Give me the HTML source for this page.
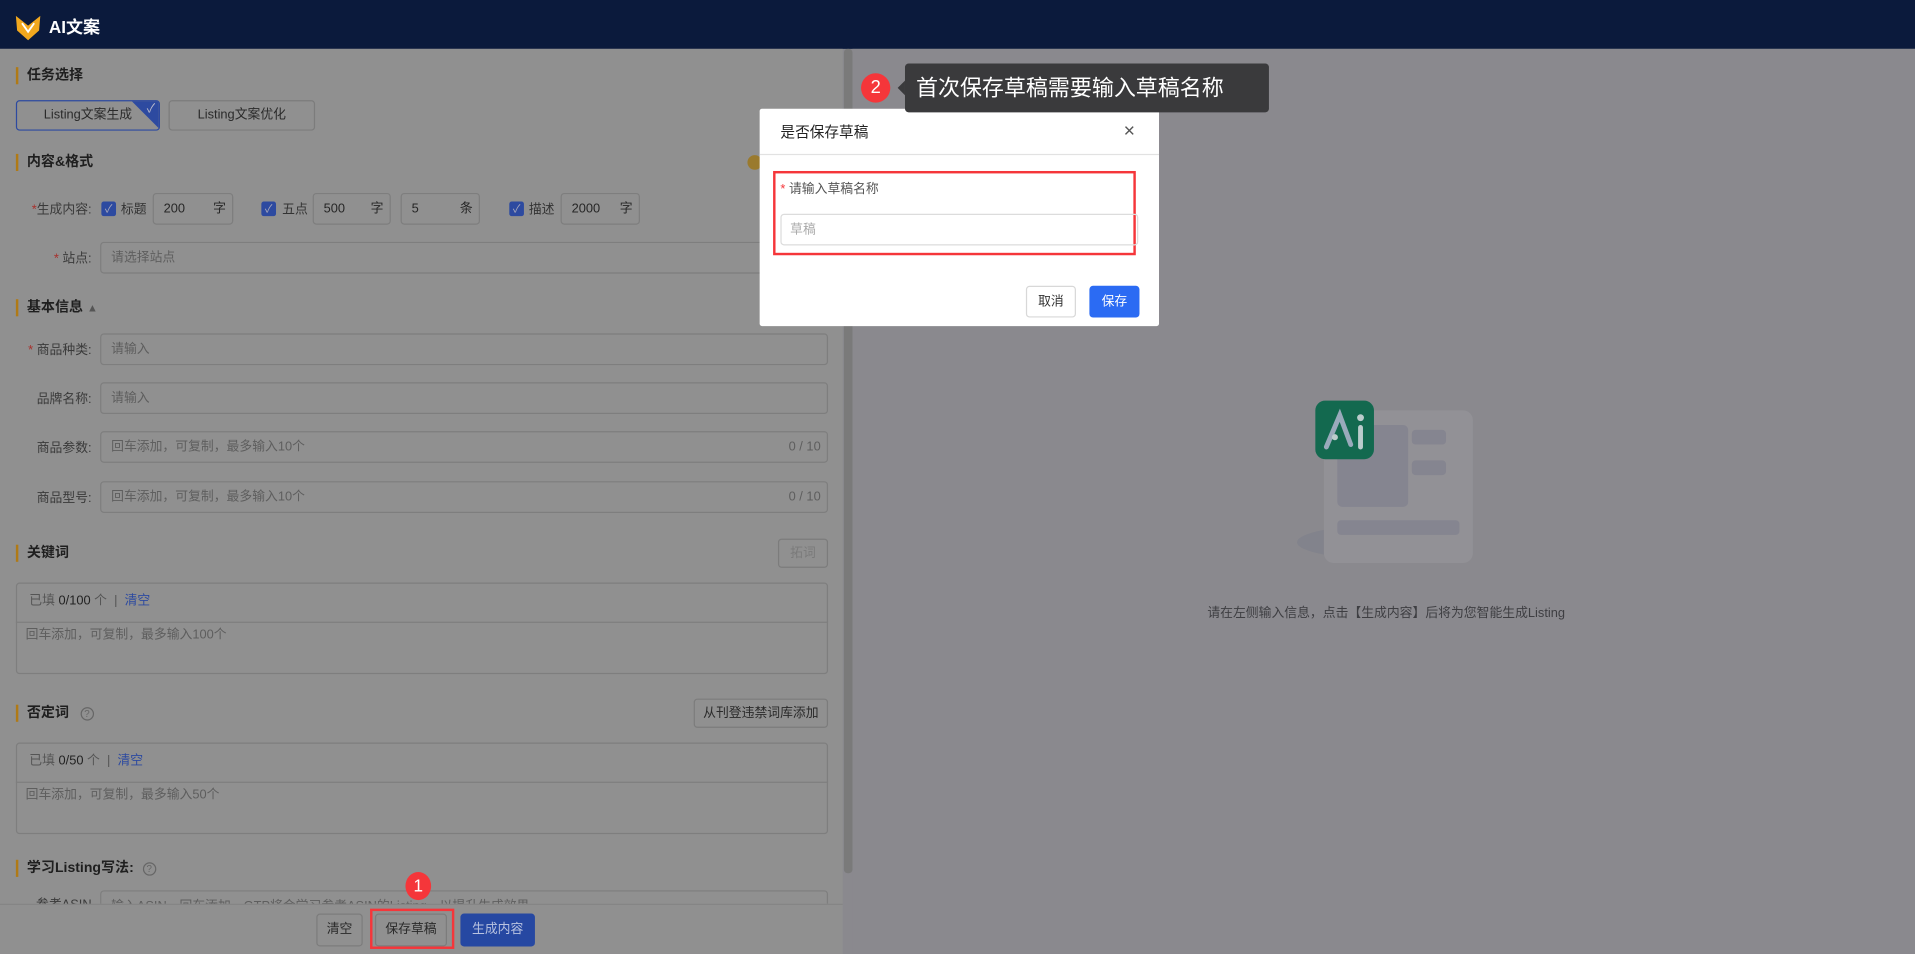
<!DOCTYPE html>
<html><head><meta charset="utf-8">
<style>
*{box-sizing:border-box;margin:0;padding:0}
html,body{width:1915px;height:954px;overflow:hidden;background:#8a898e}
#s{position:absolute;left:0;top:0;width:1568px;height:781px;transform:scale(1.22130);transform-origin:0 0;font-family:"Liberation Sans","Noto Sans CJK SC",sans-serif;font-size:11px;color:#333}
.a{position:absolute}
.hd{left:0;top:0;width:1568px;height:40px;background:#0b1a3c}
.left{left:0;top:40px;width:690px;height:741px;background:#909090}
.right{left:698px;top:40px;width:870px;height:741px;background:#8a898e}
.sb{left:691px;top:40px;width:7px;height:675px;background:#7a7a7a;border-radius:3px}
.sec{font-size:11.5px;font-weight:bold;color:#1f1f1f;padding-left:7px;border-left:2px solid #b07a16;line-height:14px}
.inp{border:1px solid #7e7e7e;border-radius:3px;background:#909090;height:26px;line-height:24px;padding-left:8px;color:#5e5e5e;font-size:10.5px}
.v{color:#262626}
.lab{font-size:10.5px;color:#3a3a3a;text-align:right;width:70px}
.st{color:#a8302c}
.cb{width:12px;height:12px;background:#2d4aa0;border-radius:2px;color:#aab;font-size:9px;line-height:12px;text-align:center}
.btn{border:1px solid #7c7c7c;border-radius:3px;text-align:center;font-size:10.5px;color:#2a2a2a;background:#909090}
</style></head><body><div id="s">
<div class="a hd"></div>
<svg class="a" style="left:12px;top:12px" width="22" height="22" viewBox="0 0 22 22"><path d="M1 1 L11 9 L21 1 L20 13 L11 21 L2 13Z" fill="#f2a81e"/><path d="M6 7 L11 14 L16 7" stroke="#fff" stroke-width="1.5" fill="none"/></svg>
<div class="a" style="left:40px;top:12px;color:#fff;font-weight:bold;font-size:14px">AI文案</div>
<div class="a left"></div><div class="a right"></div><div class="a sb"></div>

<div class="a sec" style="left:13px;top:55px">任务选择</div>
<div class="a btn" style="left:13px;top:82px;width:118px;height:25px;line-height:23px;border-color:#2d4aa0;overflow:hidden">Listing文案生成<div class="a" style="right:-1px;top:-1px;width:0;height:0;border-top:24px solid #2d4aa0;border-left:24px solid transparent"></div><span class="a" style="right:3px;top:-5px;color:#bbc;font-size:10px">✓</span></div>
<div class="a btn" style="left:138px;top:82px;width:120px;height:25px;line-height:23px">Listing文案优化</div>

<div class="a sec" style="left:13px;top:126px">内容&amp;格式</div>
<div class="a" style="left:612px;top:127px;width:12px;height:12px;border-radius:50%;background:#9a7a2e"></div>
<div class="a lab" style="left:5px;top:164px"><span class="st">*</span>生成内容:</div>
<div class="a cb" style="left:83px;top:165px">✓</div><div class="a" style="left:99px;top:164px;font-size:10.5px">标题</div>
<div class="a inp v" style="left:125px;top:158px;width:66px">200<span style="position:absolute;right:5px">字</span></div>
<div class="a cb" style="left:214px;top:165px">✓</div><div class="a" style="left:231px;top:164px;font-size:10.5px">五点</div>
<div class="a inp v" style="left:256px;top:158px;width:64px">500<span style="position:absolute;right:5px">字</span></div>
<div class="a inp v" style="left:328px;top:158px;width:65px">5<span style="position:absolute;right:5px">条</span></div>
<div class="a cb" style="left:417px;top:165px">✓</div><div class="a" style="left:433px;top:164px;font-size:10.5px">描述</div>
<div class="a inp v" style="left:459px;top:158px;width:65px">2000<span style="position:absolute;right:5px">字</span></div>
<div class="a lab" style="left:5px;top:204px"><span class="st">*</span> 站点:</div>
<div class="a inp" style="left:82px;top:198px;width:610px">请选择站点</div>

<div class="a sec" style="left:13px;top:245px">基本信息 <span style="color:#555;font-size:9px">▲</span></div>
<div class="a lab" style="left:5px;top:279px"><span class="st">*</span> 商品种类:</div>
<div class="a inp" style="left:82px;top:273px;width:596px">请输入</div>
<div class="a lab" style="left:5px;top:319px">品牌名称:</div>
<div class="a inp" style="left:82px;top:313px;width:596px">请输入</div>
<div class="a lab" style="left:5px;top:359px">商品参数:</div>
<div class="a inp" style="left:82px;top:353px;width:596px">回车添加，可复制，最多输入10个<span style="position:absolute;right:5px">0 / 10</span></div>
<div class="a lab" style="left:5px;top:400px">商品型号:</div>
<div class="a inp" style="left:82px;top:394px;width:596px">回车添加，可复制，最多输入10个<span style="position:absolute;right:5px">0 / 10</span></div>

<div class="a sec" style="left:13px;top:446px">关键词</div>
<div class="a btn" style="left:637px;top:441px;width:41px;height:24px;line-height:22px;color:#7a7a7a">拓词</div>
<div class="a" style="left:13px;top:477px;width:665px;height:75px;border:1px solid #7e7e7e;border-radius:3px"></div>
<div class="a" style="left:13px;top:509px;width:665px;height:1px;background:#7e7e7e"></div>
<div class="a" style="left:24px;top:484px;font-size:10.5px;color:#555">已填 <span style="color:#222">0/100</span> 个 &nbsp;| &nbsp;<span style="color:#2d4aa0">清空</span></div>
<div class="a" style="left:21px;top:512px;font-size:10.5px;color:#5e5e5e">回车添加，可复制，最多输入100个</div>

<div class="a sec" style="left:13px;top:577px">否定词 <span style="display:inline-block;width:11px;height:11px;border:1px solid #666;border-radius:50%;font-size:8px;line-height:9px;text-align:center;color:#666;margin-left:6px;font-weight:normal">?</span></div>
<div class="a btn" style="left:568px;top:572px;width:110px;height:24px;line-height:22px">从刊登违禁词库添加</div>
<div class="a" style="left:13px;top:608px;width:665px;height:75px;border:1px solid #7e7e7e;border-radius:3px"></div>
<div class="a" style="left:13px;top:640px;width:665px;height:1px;background:#7e7e7e"></div>
<div class="a" style="left:24px;top:615px;font-size:10.5px;color:#555">已填 <span style="color:#222">0/50</span> 个 &nbsp;| &nbsp;<span style="color:#2d4aa0">清空</span></div>
<div class="a" style="left:21px;top:643px;font-size:10.5px;color:#5e5e5e">回车添加，可复制，最多输入50个</div>

<div class="a sec" style="left:13px;top:704px">学习Listing写法: <span style="display:inline-block;width:11px;height:11px;border:1px solid #666;border-radius:50%;font-size:8px;line-height:9px;text-align:center;color:#666;margin-left:4px;font-weight:normal">?</span></div>
<div class="a inp" style="left:82px;top:729px;width:596px;height:20px">输入ASIN，回车添加，GTP将会学习参考ASIN的Listing，以提升生成效果</div>
<div class="a lab" style="left:5px;top:733px">参考ASIN</div>
<div class="a" style="left:0;top:740px;width:690px;height:41px;background:#909090;border-top:1px solid #858585"></div>
<div class="a btn" style="left:259px;top:748px;width:38px;height:27px;line-height:25px">清空</div>
<div class="a btn" style="left:307px;top:748px;width:59px;height:27px;line-height:25px">保存草稿</div>
<div class="a btn" style="left:377px;top:748px;width:61px;height:27px;line-height:25px;background:#2648a2;border-color:#2648a2;color:#b9c3e0">生成内容</div>
<div class="a" style="left:303px;top:744px;width:69px;height:33px;border:2px solid #f5363a"></div>
<div class="a" style="left:332px;top:714px;width:21px;height:23px;border-radius:50%;background:#f5363a;color:#fff;text-align:center;font-size:14px;line-height:23px">1</div>

<svg class="a" style="left:1062px;top:326px" width="146" height="140" viewBox="0 0 146 140"><ellipse cx="72" cy="118" rx="72" ry="14" fill="#82838c"/><rect x="22" y="10" width="122" height="125" rx="8" fill="#929196"/><rect x="33" y="22" width="58" height="67" rx="4" fill="#858590"/><rect x="94" y="26" width="28" height="12" rx="3" fill="#858590"/><rect x="94" y="51" width="28" height="12" rx="3" fill="#858590"/><rect x="33" y="100" width="100" height="12" rx="3" fill="#858590"/><rect x="15" y="2" width="48" height="48" rx="8" fill="#13694f"/><path d="M24 40 L35 14 L44 38" stroke="#9ab" stroke-width="4" fill="none" stroke-linecap="round"/><circle cx="31" cy="32" r="2.5" fill="#bcc"/><path d="M52 24 L52 40" stroke="#bcc" stroke-width="4" stroke-linecap="round"/><circle cx="52" cy="16" r="2.8" fill="#bcc"/></svg>
<div class="a" style="left:900px;top:494px;width:470px;text-align:center;font-size:10.5px;color:#3e3e42">请在左侧输入信息，点击【生成内容】后将为您智能生成Listing</div>

<div class="a" style="left:622px;top:89px;width:327px;height:178px;background:#fff;border-radius:2px"></div>
<div class="a" style="left:639px;top:99px;font-size:12px;color:#222">是否保存草稿</div>
<div class="a" style="left:920px;top:100px;font-size:16px;color:#555;line-height:16px">×</div>
<div class="a" style="left:622px;top:126px;width:327px;height:1px;background:#e2e2e2"></div>
<div class="a" style="left:633px;top:140px;width:297px;height:69px;border:2px solid #f5363a"></div>
<div class="a" style="left:639px;top:147px;font-size:10.5px;color:#555"><span style="color:#f5363a">*</span> 请输入草稿名称</div>
<div class="a" style="left:639px;top:175px;width:293px;height:26px;border:1px solid #dcdcdc;border-radius:3px;padding-left:7px;line-height:24px;font-size:10.5px;color:#aaa">草稿</div>
<div class="a" style="left:840px;top:234px;width:41px;height:26px;border:1px solid #d8d8d8;border-radius:3px;text-align:center;line-height:24px;font-size:10.5px;color:#333">取消</div>
<div class="a" style="left:892px;top:234px;width:41px;height:26px;background:#2b6bf3;border-radius:3px;text-align:center;line-height:26px;font-size:10.5px;color:#fff">保存</div>

<div class="a" style="left:741px;top:52px;width:298px;height:40px;background:#3a3a3c;border-radius:3px;color:#fff;font-size:18px;line-height:40px;padding-left:9px">首次保存草稿需要输入草稿名称</div>
<div class="a" style="left:735px;top:66px;width:0;height:0;border-top:6px solid transparent;border-bottom:6px solid transparent;border-right:6px solid #3a3a3c"></div>
<div class="a" style="left:705px;top:60px;width:24px;height:24px;border-radius:50%;background:#f5363a;color:#fff;text-align:center;font-size:15px;line-height:24px">2</div>
</div></body></html>
